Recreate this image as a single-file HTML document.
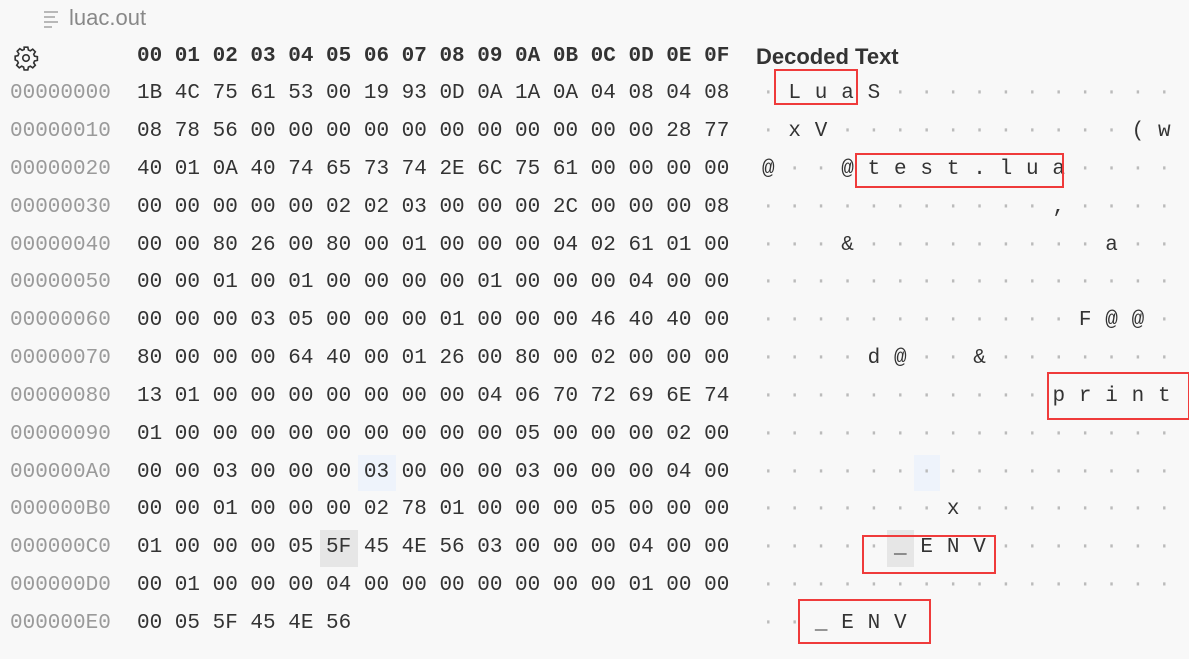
<!DOCTYPE html>
<html><head><meta charset="utf-8"><style>
body{margin:0;width:1189px;height:659px;background:#f8f8f8;overflow:hidden;position:relative;font-family:"Liberation Mono",monospace;}
.a{position:absolute;}
.row{position:absolute;left:0;height:38px;line-height:38px;font-size:21px;white-space:pre;}
.off{position:absolute;left:10px;color:#9a9a9a;}
.hex{position:absolute;left:137px;color:#333;}
.dec{position:absolute;left:762px;color:#333;letter-spacing:13.8px;}
.d{color:#bbb;}
.box{position:absolute;border:2px solid #ef3b3b;}
</style></head><body>
<div class="a" style="left:44px;top:11px;width:14px;height:2px;background:#b8b8b8"></div>
<div class="a" style="left:44px;top:16px;width:11px;height:2px;background:#b8b8b8"></div>
<div class="a" style="left:44px;top:21px;width:14px;height:2px;background:#b8b8b8"></div>
<div class="a" style="left:44px;top:26px;width:8px;height:2px;background:#b8b8b8"></div>
<div class="a" style="left:69px;top:5px;font:22px 'Liberation Sans',sans-serif;color:#888">luac.out</div>
<svg class="a" style="left:13px;top:45px" width="26" height="26" viewBox="0 0 24 24" fill="none" stroke="#333" stroke-width="1.5"><path d="M10.3 2h3.4l.5 2.6 1.8.8 2.2-1.5 2.4 2.4-1.5 2.2.8 1.8 2.6.5v3.4l-2.6.5-.8 1.8 1.5 2.2-2.4 2.4-2.2-1.5-1.8.8-.5 2.6h-3.4l-.5-2.6-1.8-.8-2.2 1.5-2.4-2.4 1.5-2.2-.8-1.8L2 13.7v-3.4l2.6-.5.8-1.8-1.5-2.2 2.4-2.4 2.2 1.5 1.8-.8z"/><circle cx="12" cy="12" r="3"/></svg>
<div class="a" style="left:358px;top:455px;width:38px;height:36px;background:#eef3fb"></div>
<div class="a" style="left:914px;top:455px;width:26px;height:36px;background:#eef3fb"></div>
<div class="a" style="left:320px;top:530px;width:38px;height:37px;background:#e6e6e6"></div>
<div class="a" style="left:887px;top:530px;width:27px;height:37px;background:#e6e6e6"></div>
<div class="row" style="top:38px;font-weight:bold"><span class="hex">00 01 02 03 04 05 06 07 08 09 0A 0B 0C 0D 0E 0F</span><span class="a" style="left:756px;font:bold 22px 'Liberation Sans',sans-serif;line-height:38px;color:#333">Decoded Text</span></div>
<div class="row" style="top:75px"><span class="off">00000000</span><span class="hex">1B 4C 75 61 53 00 19 93 0D 0A 1A 0A 04 08 04 08</span><span class="dec"><span class="d">·</span>LuaS<span class="d">···········</span></span></div>
<div class="row" style="top:113px"><span class="off">00000010</span><span class="hex">08 78 56 00 00 00 00 00 00 00 00 00 00 00 28 77</span><span class="dec"><span class="d">·</span>xV<span class="d">···········</span>(w</span></div>
<div class="row" style="top:151px"><span class="off">00000020</span><span class="hex">40 01 0A 40 74 65 73 74 2E 6C 75 61 00 00 00 00</span><span class="dec">@<span class="d">··</span>@test.lua<span class="d">····</span></span></div>
<div class="row" style="top:189px"><span class="off">00000030</span><span class="hex">00 00 00 00 00 02 02 03 00 00 00 2C 00 00 00 08</span><span class="dec"><span class="d">···········</span>,<span class="d">····</span></span></div>
<div class="row" style="top:227px"><span class="off">00000040</span><span class="hex">00 00 80 26 00 80 00 01 00 00 00 04 02 61 01 00</span><span class="dec"><span class="d">···</span>&amp;<span class="d">·········</span>a<span class="d">··</span></span></div>
<div class="row" style="top:264px"><span class="off">00000050</span><span class="hex">00 00 01 00 01 00 00 00 00 01 00 00 00 04 00 00</span><span class="dec"><span class="d">················</span></span></div>
<div class="row" style="top:302px"><span class="off">00000060</span><span class="hex">00 00 00 03 05 00 00 00 01 00 00 00 46 40 40 00</span><span class="dec"><span class="d">············</span>F@@<span class="d">·</span></span></div>
<div class="row" style="top:340px"><span class="off">00000070</span><span class="hex">80 00 00 00 64 40 00 01 26 00 80 00 02 00 00 00</span><span class="dec"><span class="d">····</span>d@<span class="d">··</span>&amp;<span class="d">·······</span></span></div>
<div class="row" style="top:378px"><span class="off">00000080</span><span class="hex">13 01 00 00 00 00 00 00 00 04 06 70 72 69 6E 74</span><span class="dec"><span class="d">···········</span>print</span></div>
<div class="row" style="top:416px"><span class="off">00000090</span><span class="hex">01 00 00 00 00 00 00 00 00 00 05 00 00 00 02 00</span><span class="dec"><span class="d">················</span></span></div>
<div class="row" style="top:454px"><span class="off">000000A0</span><span class="hex">00 00 03 00 00 00 03 00 00 00 03 00 00 00 04 00</span><span class="dec"><span class="d">················</span></span></div>
<div class="row" style="top:491px"><span class="off">000000B0</span><span class="hex">00 00 01 00 00 00 02 78 01 00 00 00 05 00 00 00</span><span class="dec"><span class="d">·······</span>x<span class="d">········</span></span></div>
<div class="row" style="top:529px"><span class="off">000000C0</span><span class="hex">01 00 00 00 05 5F 45 4E 56 03 00 00 00 04 00 00</span><span class="dec"><span class="d">·····</span>_ENV<span class="d">·······</span></span></div>
<div class="row" style="top:567px"><span class="off">000000D0</span><span class="hex">00 01 00 00 00 04 00 00 00 00 00 00 00 01 00 00</span><span class="dec"><span class="d">················</span></span></div>
<div class="row" style="top:605px"><span class="off">000000E0</span><span class="hex">00 05 5F 45 4E 56</span><span class="dec"><span class="d">··</span>_ENV</span></div>
<div class="box" style="left:774px;top:69px;width:80px;height:32px"></div>
<div class="box" style="left:855px;top:153px;width:205px;height:31px"></div>
<div class="box" style="left:1047px;top:372px;width:139px;height:44px"></div>
<div class="box" style="left:862px;top:535px;width:130px;height:35px"></div>
<div class="box" style="left:798px;top:599px;width:129px;height:41px"></div>
</body></html>
